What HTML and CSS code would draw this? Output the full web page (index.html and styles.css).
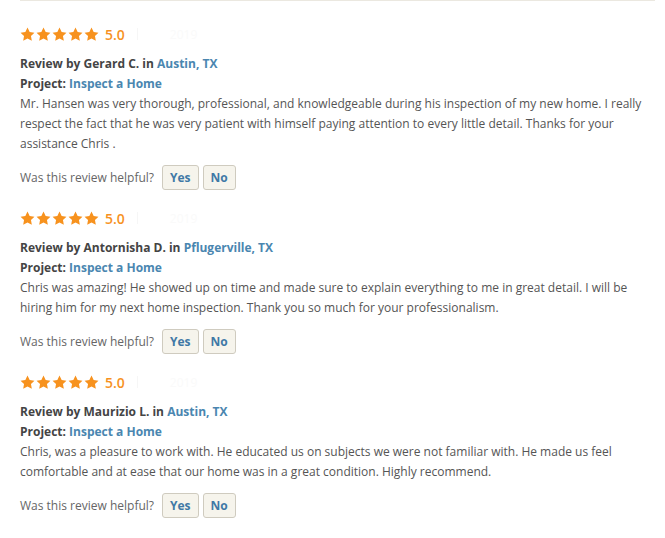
FILE: index.html
```html
<!DOCTYPE html>
<html>
<head>
<meta charset="utf-8">
<link rel="stylesheet" href="styles.css">
</head>
<body>
<div class="reviews">
  <div class="top-rule"></div>
  <div class="review">
    <div class="rating">
      <span class="stars">
        <svg viewBox="0 0 16 16"><path d="M8 0.6l2.3 4.7 5.1.7-3.7 3.6.9 5.1L8 12.3l-4.6 2.4.9-5.1L.6 6l5.1-.7z"/></svg>
        <svg viewBox="0 0 16 16"><path d="M8 0.6l2.3 4.7 5.1.7-3.7 3.6.9 5.1L8 12.3l-4.6 2.4.9-5.1L.6 6l5.1-.7z"/></svg>
        <svg viewBox="0 0 16 16"><path d="M8 0.6l2.3 4.7 5.1.7-3.7 3.6.9 5.1L8 12.3l-4.6 2.4.9-5.1L.6 6l5.1-.7z"/></svg>
        <svg viewBox="0 0 16 16"><path d="M8 0.6l2.3 4.7 5.1.7-3.7 3.6.9 5.1L8 12.3l-4.6 2.4.9-5.1L.6 6l5.1-.7z"/></svg>
        <svg viewBox="0 0 16 16"><path d="M8 0.6l2.3 4.7 5.1.7-3.7 3.6.9 5.1L8 12.3l-4.6 2.4.9-5.1L.6 6l5.1-.7z"/></svg>
      </span>
      <span class="score">5.0</span>
      <span class="sep"></span>
      <span class="date">2019</span>
    </div>
    <div class="line strong">Review by Gerard C. in <a class="link">Austin, TX</a></div>
    <div class="line strong">Project: <a class="link">Inspect a Home</a></div>
    <p class="body">Mr. Hansen was very thorough, professional, and knowledgeable during his inspection of my new home. I really respect the fact that he was very patient with himself paying attention to every little detail. Thanks for your assistance Chris .</p>
    <div class="helpful">
      <span class="q">Was this review helpful?</span>
      <button class="btn">Yes</button>
      <button class="btn">No</button>
    </div>
  </div>
  <div class="review">
    <div class="rating">
      <span class="stars">
        <svg viewBox="0 0 16 16"><path d="M8 0.6l2.3 4.7 5.1.7-3.7 3.6.9 5.1L8 12.3l-4.6 2.4.9-5.1L.6 6l5.1-.7z"/></svg>
        <svg viewBox="0 0 16 16"><path d="M8 0.6l2.3 4.7 5.1.7-3.7 3.6.9 5.1L8 12.3l-4.6 2.4.9-5.1L.6 6l5.1-.7z"/></svg>
        <svg viewBox="0 0 16 16"><path d="M8 0.6l2.3 4.7 5.1.7-3.7 3.6.9 5.1L8 12.3l-4.6 2.4.9-5.1L.6 6l5.1-.7z"/></svg>
        <svg viewBox="0 0 16 16"><path d="M8 0.6l2.3 4.7 5.1.7-3.7 3.6.9 5.1L8 12.3l-4.6 2.4.9-5.1L.6 6l5.1-.7z"/></svg>
        <svg viewBox="0 0 16 16"><path d="M8 0.6l2.3 4.7 5.1.7-3.7 3.6.9 5.1L8 12.3l-4.6 2.4.9-5.1L.6 6l5.1-.7z"/></svg>
      </span>
      <span class="score">5.0</span>
      <span class="sep"></span>
      <span class="date">2019</span>
    </div>
    <div class="line strong">Review by Antornisha D. in <a class="link">Pflugerville, TX</a></div>
    <div class="line strong">Project: <a class="link">Inspect a Home</a></div>
    <p class="body">Chris was amazing! He showed up on time and made sure to explain everything to me in great detail. I will be hiring him for my next home inspection. Thank you so much for your professionalism.</p>
    <div class="helpful">
      <span class="q">Was this review helpful?</span>
      <button class="btn">Yes</button>
      <button class="btn">No</button>
    </div>
  </div>
  <div class="review">
    <div class="rating">
      <span class="stars">
        <svg viewBox="0 0 16 16"><path d="M8 0.6l2.3 4.7 5.1.7-3.7 3.6.9 5.1L8 12.3l-4.6 2.4.9-5.1L.6 6l5.1-.7z"/></svg>
        <svg viewBox="0 0 16 16"><path d="M8 0.6l2.3 4.7 5.1.7-3.7 3.6.9 5.1L8 12.3l-4.6 2.4.9-5.1L.6 6l5.1-.7z"/></svg>
        <svg viewBox="0 0 16 16"><path d="M8 0.6l2.3 4.7 5.1.7-3.7 3.6.9 5.1L8 12.3l-4.6 2.4.9-5.1L.6 6l5.1-.7z"/></svg>
        <svg viewBox="0 0 16 16"><path d="M8 0.6l2.3 4.7 5.1.7-3.7 3.6.9 5.1L8 12.3l-4.6 2.4.9-5.1L.6 6l5.1-.7z"/></svg>
        <svg viewBox="0 0 16 16"><path d="M8 0.6l2.3 4.7 5.1.7-3.7 3.6.9 5.1L8 12.3l-4.6 2.4.9-5.1L.6 6l5.1-.7z"/></svg>
      </span>
      <span class="score">5.0</span>
      <span class="sep"></span>
      <span class="date">2019</span>
    </div>
    <div class="line strong">Review by Maurizio L. in <a class="link">Austin, TX</a></div>
    <div class="line strong">Project: <a class="link">Inspect a Home</a></div>
    <p class="body">Chris, was a pleasure to work with. He educated us on subjects we were not familiar with. He made us feel comfortable and at ease that our home was in a great condition. Highly recommend.</p>
    <div class="helpful">
      <span class="q">Was this review helpful?</span>
      <button class="btn">Yes</button>
      <button class="btn">No</button>
    </div>
  </div>
</div>
</body>
</html>
```
FILE: styles.css
```css
html, body {
  margin: 0;
  padding: 0;
  background: #ffffff;
}
body {
  font-family: "Open Sans", "Liberation Sans", sans-serif;
  font-size: 12px;
  color: #555555;
}
.reviews {
  padding: 0 10px 0 20px;
}
.top-rule {
  height: 1px;
  background: #ebe8e0;
  margin-bottom: 23px;
}
.review {
  margin-bottom: 18px;
}
.rating {
  display: flex;
  align-items: center;
  height: 20px;
  margin-bottom: 10px;
}
.stars {
  display: flex;
  gap: 1px;
}
.stars svg {
  width: 15px;
  height: 15px;
  fill: #f7921e;
}
.score {
  margin-left: 6px;
  font-size: 14px;
  font-weight: 600;
  color: #f7921e;
}
.sep {
  width: 1px;
  height: 12px;
  background: #f6f6f6;
  margin-left: 12px;
}
.date {
  margin-left: 32px;
  color: #fafafa;
  font-size: 12px;
}
.line {
  line-height: 20px;
}
.strong {
  font-weight: 700;
  color: #444444;
}
.link {
  color: #4a86b0;
  font-weight: 700;
}
.body {
  margin: 0;
  line-height: 20px;
  color: #555555;
}
.helpful {
  display: flex;
  align-items: center;
  margin-top: 11px;
}
.q {
  color: #666666;
  margin-right: 8px;
}
.btn {
  height: 25px;
  padding: 0 7px;
  margin-right: 4px;
  font-family: "Open Sans", "Liberation Sans", sans-serif;
  font-size: 12px;
  font-weight: 700;
  color: #3f79a6;
  background: #f6f4ec;
  border: 1px solid #cfcbbf;
  border-radius: 3px;
}
```
